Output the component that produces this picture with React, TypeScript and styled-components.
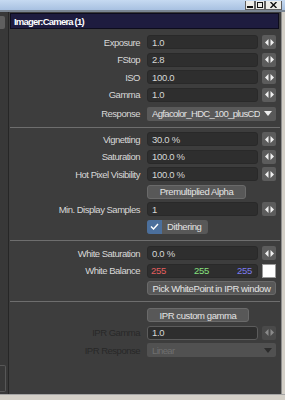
import React from 'react';
import styled, { createGlobalStyle } from 'styled-components';

const GlobalStyle = createGlobalStyle`
  html, body {
    margin: 0;
    padding: 0;
    background: #d4d0c8;
  }
  body {
    font-family: "Liberation Sans", Arial, sans-serif;
  }
`;

const Window = styled.div`
  width: 285px;
  height: 400px;
  display: flex;
  flex-direction: column;
  overflow: hidden;
  font-family: "Liberation Sans", Arial, sans-serif;
`;

const TitleBar = styled.div`
  flex: none;
  height: 10px;
  background: linear-gradient(#c6daf1, #a8c1e1);
  border-bottom: 2px solid #7b8693;
  display: flex;
  justify-content: flex-end;
  align-items: flex-end;
  padding-right: 3px;
`;

const CaptionButton = styled.div<{ $wide?: boolean }>`
  box-sizing: border-box;
  width: ${(p) => (p.$wide ? 17 : 10)}px;
  height: 9px;
  background: #ecebe6;
  border: 1px solid #5f5f5f;
  border-top: none;
  display: flex;
  align-items: flex-end;
  justify-content: center;
  padding-bottom: 1px;
`;

const Body = styled.div`
  flex: 1;
  display: flex;
  min-height: 0;
`;

const LeftStrip = styled.div`
  flex: none;
  width: 8px;
  background: #383838;
  border-right: 1px solid #262626;
  display: flex;
  flex-direction: column;
`;

const StripTab = styled.div`
  width: 5px;
  height: 13px;
  margin-top: 4px;
  background: #5f5f5f;
  border-radius: 0 2px 2px 0;
`;

const StripBox = styled.div`
  box-sizing: border-box;
  width: 6px;
  height: 27px;
  margin-top: auto;
  margin-bottom: 2px;
  border: 1px solid #575757;
  border-left: none;
  border-radius: 0 2px 2px 0;
`;

const Panel = styled.div`
  flex: 1;
  background: #3d3d3d;
  display: flex;
  flex-direction: column;
`;

const RightFrame = styled.div`
  flex: none;
  width: 3px;
  background: #d2cec6;
  border-left: 1px solid #8e8e8e;
`;

const BottomFrame = styled.div`
  flex: none;
  height: 5px;
  background: #d4d0c8;
  border-top: 1px solid #a4a4a4;
`;

const Header = styled.div`
  box-sizing: border-box;
  height: 16px;
  margin: 1px 2px 0 1px;
  padding-left: 3px;
  background: #1e1c3f;
  border: 1px solid #0d0c1c;
  color: #ffffff;
  font-size: 9.5px;
  font-weight: bold;
  letter-spacing: -0.8px;
  display: flex;
  align-items: center;
`;

const Section = styled.div<{ $top: number }>`
  display: flex;
  flex-direction: column;
  gap: 3.5px;
  padding: ${(p) => p.$top}px 5px 6px 0;
`;

const Divider = styled.div`
  height: 1px;
  margin: 0 1px;
  background: #6e6e6e;
`;

const Row = styled.div<{ $offset?: number }>`
  display: grid;
  grid-template-columns: 131px 1fr;
  column-gap: 7px;
  align-items: center;
  height: 14px;
  margin-top: ${(p) => p.$offset ?? 0}px;
`;

const Label = styled.span<{ $disabled?: boolean }>`
  text-align: right;
  font-size: 9.5px;
  letter-spacing: -0.5px;
  color: ${(p) => (p.$disabled ? '#282828' : '#d8d8d8')};
  white-space: nowrap;
`;

const Controls = styled.div`
  display: flex;
  gap: 4px;
  height: 100%;
  min-width: 0;
`;

const Field = styled.div<{ $focused?: boolean }>`
  box-sizing: border-box;
  flex: 1;
  display: flex;
  align-items: center;
  padding-left: 4px;
  background: #2e2e2e;
  border: 1px solid ${(p) => (p.$focused ? '#5c5c5c' : '#292929')};
  border-radius: 3px;
  color: #d6d6d6;
  font-size: 9.5px;
  letter-spacing: -0.3px;
`;

const Spinner = styled.div<{ $disabled?: boolean }>`
  flex: none;
  width: 14px;
  display: flex;
  align-items: center;
  justify-content: center;
  background: ${(p) => (p.$disabled ? '#4a4a4a' : '#5c5c5c')};
  border-radius: 2px;
  color: ${(p) => (p.$disabled ? '#8a8a8a' : '#f0f0f0')};
`;

const Dropdown = styled.div<{ $disabled?: boolean }>`
  box-sizing: border-box;
  flex: 1;
  min-width: 0;
  display: flex;
  align-items: center;
  gap: 4px;
  padding: 0 4px 0 5px;
  background: ${(p) => (p.$disabled ? '#515151' : '#595959')};
  border-radius: 2px;
  color: ${(p) => (p.$disabled ? '#6f6f6f' : '#e2e2e2')};
  font-size: 9.5px;
  letter-spacing: -0.65px;
  white-space: nowrap;
`;

const DropdownText = styled.span`
  flex: 1;
  min-width: 0;
  overflow: hidden;
`;

const Button = styled.div<{ $width?: number }>`
  box-sizing: border-box;
  width: ${(p) => (p.$width ? `${p.$width}px` : '100%')};
  display: flex;
  align-items: center;
  justify-content: center;
  background: #585858;
  border: 1px solid #6a6a6a;
  border-radius: 3px;
  color: #e4e4e4;
  font-size: 9.5px;
  letter-spacing: -0.4px;
  white-space: nowrap;
`;

const Toggle = styled.div`
  width: 61px;
  display: flex;
  background: #585858;
  border-radius: 3px;
  overflow: hidden;
  color: #e4e4e4;
  font-size: 9.5px;
  letter-spacing: -0.4px;
`;

const CheckPart = styled.div`
  width: 15px;
  display: flex;
  align-items: center;
  justify-content: center;
  background: #4b6f9c;
`;

const ToggleText = styled.span`
  display: flex;
  align-items: center;
  padding-left: 5px;
`;

const ColorValues = styled(Field)`
  justify-content: space-between;
  padding: 0 5px 0 3px;
`;

const Channel = styled.span<{ $color: string }>`
  color: ${(p) => p.$color};
`;

const Swatch = styled.div`
  box-sizing: border-box;
  flex: none;
  width: 14px;
  background: #ffffff;
  border: 1px solid #9a9a9a;
`;

const SpinGlyph = () => (
  <svg width="9" height="7" viewBox="0 0 9 7">
    <polygon points="0,3.5 3.5,0 3.5,7" fill="currentColor" />
    <polygon points="9,3.5 5.5,0 5.5,7" fill="currentColor" />
  </svg>
);

const DownArrow = ({ color }: { color: string }) => (
  <svg width="8" height="5" viewBox="0 0 8 5" style={{ flex: 'none' }}>
    <polygon points="0,0 8,0 4,5" fill={color} />
  </svg>
);

function NumberRow({
  label,
  value,
  disabled,
  focused,
}: {
  label: string;
  value: string;
  disabled?: boolean;
  focused?: boolean;
}) {
  return (
    <Row>
      <Label $disabled={disabled}>{label}</Label>
      <Controls>
        <Field $focused={focused}>{value}</Field>
        <Spinner $disabled={disabled}>
          <SpinGlyph />
        </Spinner>
      </Controls>
    </Row>
  );
}

export default function App() {
  return (
    <Window>
      <GlobalStyle />
      <TitleBar>
        <CaptionButton>
          <svg width="6" height="2" viewBox="0 0 6 2">
            <rect width="6" height="2" fill="#111" />
          </svg>
        </CaptionButton>
        <CaptionButton>
          <svg width="6" height="6" viewBox="0 0 6 6">
            <rect x="0.5" y="0.5" width="5" height="5" fill="none" stroke="#111" />
          </svg>
        </CaptionButton>
        <CaptionButton $wide>
          <svg width="7" height="6" viewBox="0 0 7 6">
            <path d="M0.5 0 L6.5 6 M6.5 0 L0.5 6" stroke="#111" strokeWidth="1.4" />
          </svg>
        </CaptionButton>
      </TitleBar>
      <Body>
        <LeftStrip>
          <StripTab />
          <StripBox />
        </LeftStrip>
        <Panel>
          <Header>Imager:Camera (1)</Header>

          <Section $top={6}>
            <NumberRow label="Exposure" value="1.0" />
            <NumberRow label="FStop" value="2.8" />
            <NumberRow label="ISO" value="100.0" />
            <NumberRow label="Gamma" value="1.0" />
            <Row $offset={1.5}>
              <Label>Response</Label>
              <Controls>
                <Dropdown>
                  <DropdownText>Agfacolor_HDC_100_plusCD</DropdownText>
                  <DownArrow color="#eeeeee" />
                </Dropdown>
              </Controls>
            </Row>
          </Section>
          <Divider />

          <Section $top={4.5}>
            <NumberRow label="Vignetting" value="30.0 %" />
            <NumberRow label="Saturation" value="100.0 %" />
            <NumberRow label="Hot Pixel Visibility" value="100.0 %" />
            <Row>
              <span />
              <Controls>
                <Button $width={99}>Premultiplied Alpha</Button>
              </Controls>
            </Row>
            <NumberRow label="Min. Display Samples" value="1" />
            <Row>
              <span />
              <Controls>
                <Toggle>
                  <CheckPart>
                    <svg width="9" height="7" viewBox="0 0 9 7">
                      <polyline
                        points="1,3.5 3.5,6 8,1"
                        fill="none"
                        stroke="#ffffff"
                        strokeWidth="1.4"
                      />
                    </svg>
                  </CheckPart>
                  <ToggleText>Dithering</ToggleText>
                </Toggle>
              </Controls>
            </Row>
          </Section>
          <Divider />

          <Section $top={5.5}>
            <NumberRow label="White Saturation" value="0.0 %" />
            <Row>
              <Label>White Balance</Label>
              <Controls>
                <ColorValues>
                  <Channel $color="#e35f5f">255</Channel>
                  <Channel $color="#86e07e">255</Channel>
                  <Channel $color="#7c7cf0">255</Channel>
                </ColorValues>
                <Swatch />
              </Controls>
            </Row>
            <Row>
              <span />
              <Controls>
                <Button>Pick WhitePoint in IPR window</Button>
              </Controls>
            </Row>
          </Section>
          <Divider />

          <Section $top={6}>
            <Row>
              <span />
              <Controls>
                <Button $width={102}>IPR custom gamma</Button>
              </Controls>
            </Row>
            <NumberRow label="IPR Gamma" value="1.0" disabled focused />
            <Row>
              <Label $disabled>IPR Response</Label>
              <Controls>
                <Dropdown $disabled>
                  <DropdownText>Linear</DropdownText>
                  <DownArrow color="#2c2c2c" />
                </Dropdown>
              </Controls>
            </Row>
          </Section>
        </Panel>
        <RightFrame />
      </Body>
      <BottomFrame />
    </Window>
  );
}
